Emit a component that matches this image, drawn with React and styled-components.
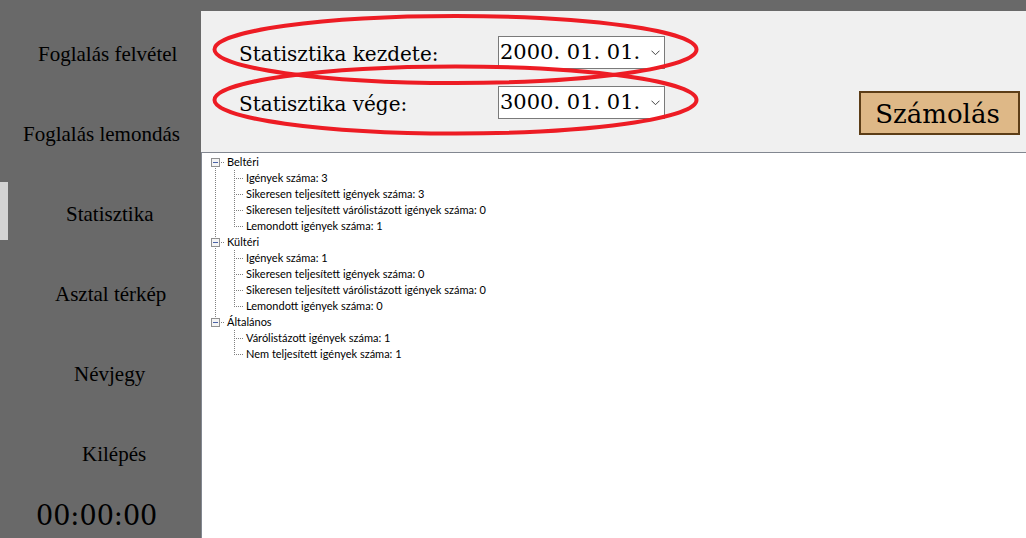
import React, { useState } from "react";
import styled, { createGlobalStyle } from "styled-components";

const serif = `"Liberation Serif", "Times New Roman", serif`;
const wideSerif = `"DejaVu Serif", "Bookman Old Style", serif`;
const sans = `Lato, "Liberation Sans", Arial, sans-serif`;

const dotsX = "repeating-linear-gradient(to right, #808080 0 1px, transparent 1px 2px)";
const dotsY = "repeating-linear-gradient(to bottom, #808080 0 1px, transparent 1px 2px)";

const GlobalStyle = createGlobalStyle`
  *, *::before, *::after { box-sizing: border-box; }
  body { margin: 0; background: #696969; color: #000; }
  button, input { color: inherit; }
`;

const Page = styled.div`
  display: grid;
  grid-template-columns: 201px minmax(0, 1fr);
  min-height: 100vh;
`;

const Sidebar = styled.aside`
  display: flex;
  flex-direction: column;
  padding-top: 22px;
`;

const Menu = styled.nav`
  display: flex;
  flex-direction: column;
  gap: 22px;
`;

const MenuButton = styled.button`
  height: 58px;
  padding: 6px 0 0 ${(p) => p.$indent - 8}px;
  border: 0;
  border-left: 8px solid ${(p) => (p.$active ? "#d3d3d3" : "transparent")};
  background: none;
  font: 21px/24px ${serif};
  text-align: left;
  white-space: nowrap;
  cursor: pointer;
`;

const Clock = styled.time`
  padding: 20px 0 0 36px;
  font: 27px/32px ${wideSerif};
`;

const Main = styled.main`
  display: flex;
  flex-direction: column;
  min-width: 0;
  margin-top: 11px;
`;

const Header = styled.header`
  position: relative;
  display: flex;
  justify-content: space-between;
  align-items: flex-end;
  padding: 25px 6px 17px 38px;
  background: #f0f0f0;
`;

const Filters = styled.div`
  display: flex;
  flex-direction: column;
  gap: 17px;
  padding-bottom: 16px;
`;

const Field = styled.div`
  display: grid;
  grid-template-columns: 259px 167px;
  align-items: end;
`;

const FieldLabel = styled.label`
  font: 20px/30px ${wideSerif};
`;

const DateBox = styled.div`
  display: flex;
  height: 33px;
  border: 1px solid #7a7a7a;
  background: #fff;
`;

const DateInput = styled.input`
  flex: 1;
  min-width: 0;
  padding: 0 0 2px 1px;
  border: 0;
  outline: 0;
  background: none;
  font: 21px/28px ${wideSerif};
`;

const DropButton = styled.button`
  display: flex;
  align-items: center;
  justify-content: center;
  width: 18px;
  padding: 0;
  border: 0;
  background: none;
`;

const CountButton = styled.button`
  width: 161px;
  height: 44px;
  padding: 2px 4px 0 0;
  border: 2px solid #5c3d17;
  background: #deb887;
  font: 26px/32px ${wideSerif};
  cursor: pointer;
`;

const Marks = styled.svg`
  position: absolute;
  top: 0;
  left: 0;
  pointer-events: none;
`;

const Tree = styled.ul`
  flex: 1;
  margin: 0;
  padding: 1px 0 0 9px;
  border: solid #828790;
  border-width: 1px 0 0 1px;
  background: #fff;
  font: 11px/16px ${sans};
  list-style: none;
`;

const Group = styled.li`
  background: ${dotsY} no-repeat 4px 0 / 1px 100%;

  &:first-child { background-position: 4px 8px; }
  &:last-child { background-size: 1px 8px; }
`;

const GroupRow = styled.div`
  display: flex;
  align-items: center;
  height: 16px;
`;

const Toggle = styled.button`
  display: flex;
  width: 9px;
  height: 9px;
  padding: 0;
  border: 0;
  background: none;
`;

const Stub = styled.span`
  width: 7px;
  height: 1px;
  background: ${dotsX} no-repeat 1px 0 / 4px 1px;
`;

const Items = styled.ul`
  margin: 0;
  padding: 0 0 0 23px;
  list-style: none;
`;

const Item = styled.li`
  display: flex;
  height: 16px;
  white-space: nowrap;

  &::before {
    content: "";
    width: 12px;
    background:
      ${dotsY} no-repeat 0 0 / 1px 16px,
      ${dotsX} no-repeat 0 8px / 10px 1px;
  }

  &:last-child::before {
    background-size: 1px 8px, 10px 1px;
  }
`;

const menu = [
  { label: "Foglalás felvétel", indent: 38 },
  { label: "Foglalás lemondás", indent: 23 },
  { label: "Statisztika", indent: 66, active: true },
  { label: "Asztal térkép", indent: 55 },
  { label: "Névjegy", indent: 74 },
  { label: "Kilépés", indent: 82 },
];

const groups = [
  {
    name: "Beltéri",
    items: [
      "Igények száma: 3",
      "Sikeresen teljesített igények száma: 3",
      "Sikeresen teljesített várólistázott igények száma: 0",
      "Lemondott igények száma: 1",
    ],
  },
  {
    name: "Kültéri",
    items: [
      "Igények száma: 1",
      "Sikeresen teljesített igények száma: 0",
      "Sikeresen teljesített várólistázott igények száma: 0",
      "Lemondott igények száma: 0",
    ],
  },
  {
    name: "Általános",
    items: ["Várólistázott igények száma: 1", "Nem teljesített igények száma: 1"],
  },
];

function DateField({ id, label, initial }) {
  const [value, setValue] = useState(initial);
  return (
    <Field>
      <FieldLabel htmlFor={id}>{label}</FieldLabel>
      <DateBox>
        <DateInput id={id} value={value} onChange={(e) => setValue(e.target.value)} />
        <DropButton type="button" aria-label="Naptár">
          <svg width="9" height="6" viewBox="0 0 9 6" fill="none" stroke="#444" aria-hidden="true">
            <path d="M0.5 0.7 L4.5 4.7 L8.5 0.7" />
          </svg>
        </DropButton>
      </DateBox>
    </Field>
  );
}

function TreeGroup({ name, items }) {
  const [open, setOpen] = useState(true);
  return (
    <Group>
      <GroupRow>
        <Toggle type="button" aria-label={name} aria-expanded={open} onClick={() => setOpen(!open)}>
          <svg width="9" height="9" viewBox="0 0 9 9" aria-hidden="true">
            <rect x="0.5" y="0.5" width="8" height="8" fill="#f4f4f4" stroke="#919191" />
            <path d={open ? "M2 4.5H7" : "M2 4.5H7M4.5 2V7"} stroke="#4b63a7" />
          </svg>
        </Toggle>
        <Stub />
        {name}
      </GroupRow>
      {open && (
        <Items>
          {items.map((text) => (
            <Item key={text}>{text}</Item>
          ))}
        </Items>
      )}
    </Group>
  );
}

export default function App() {
  return (
    <Page>
      <GlobalStyle />
      <Sidebar>
        <Menu>
          {menu.map((m) => (
            <MenuButton key={m.label} type="button" $indent={m.indent} $active={m.active}>
              {m.label}
            </MenuButton>
          ))}
        </Menu>
        <Clock>00:00:00</Clock>
      </Sidebar>
      <Main>
        <Header>
          <Filters>
            <DateField id="start" label="Statisztika kezdete:" initial="2000. 01. 01." />
            <DateField id="end" label="Statisztika vége:" initial="3000. 01. 01." />
          </Filters>
          <CountButton type="button">Számolás</CountButton>
          <Marks width="510" height="130" viewBox="0 0 510 130" fill="none" stroke="#ed1c24" strokeWidth="4" aria-hidden="true">
            <ellipse cx="254.5" cy="38.5" rx="241" ry="33.5" />
            <ellipse cx="254.5" cy="89" rx="241" ry="33.5" />
          </Marks>
        </Header>
        <Tree>
          {groups.map((g) => (
            <TreeGroup key={g.name} {...g} />
          ))}
        </Tree>
      </Main>
    </Page>
  );
}
